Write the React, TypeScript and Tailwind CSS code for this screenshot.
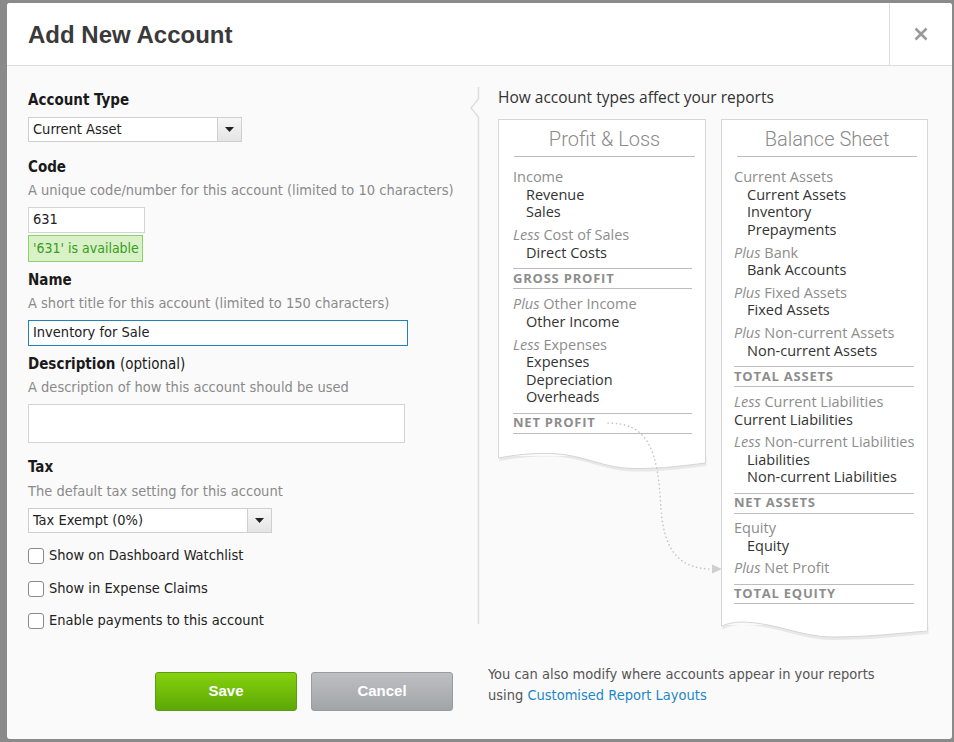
import type { ReactNode } from 'react';

const LEFT_FONT = "font-['DejaVu_Sans_Condensed','DejaVu_Sans',sans-serif]";
const CARD_FONT = "font-['Open_Sans',sans-serif]";

function Select({ value, width }: { value: string; width: string }) {
  return (
    <div className={`flex h-[25px] border border-[#cfcfcf] bg-white ${width}`}>
      <div className="flex flex-1 items-center pl-[4px] text-[14.5px] text-[#222]">{value}</div>
      <div className="flex w-[24px] items-center justify-center border-l border-[#cfcfcf] bg-gradient-to-b from-[#f7f7f7] to-[#e4e4e4]">
        <svg width="9" height="5" viewBox="0 0 9 5">
          <path d="M0 0 H9 L4.5 5 Z" fill="#222" />
        </svg>
      </div>
    </div>
  );
}

function Label({ children, className = '' }: { children: ReactNode; className?: string }) {
  return <div className={`text-[15px] leading-[18px] font-bold text-[#1a1a1a] ${className}`}>{children}</div>;
}

function Help({ children, className = '' }: { children: ReactNode; className?: string }) {
  return <div className={`text-[14.5px] leading-[18px] text-[#8a8a8a] ${className}`}>{children}</div>;
}

function Check({ label, className = '' }: { label: string; className?: string }) {
  return (
    <div className={`flex h-[18px] items-center gap-[5px] ${className}`}>
      <div className="h-[16px] w-[16px] rounded-[3px] border border-[#8a8a8a] bg-white" />
      <span className="text-[14.5px] text-[#222]">{label}</span>
    </div>
  );
}

function Head({ pre, children, className = '' }: { pre?: string; children: ReactNode; className?: string }) {
  return (
    <div className={`h-[17.5px] text-[14.5px] leading-[17.5px] whitespace-nowrap text-[#8d8d8d] ${className}`}>
      {pre && <span className="italic">{pre} </span>}
      {children}
    </div>
  );
}

function Item({ children, flat = false }: { children: ReactNode; flat?: boolean }) {
  return (
    <div
      className={`h-[17.5px] text-[14.5px] leading-[17.5px] font-medium whitespace-nowrap text-[#333] ${flat ? '' : 'pl-[13px]'}`}
    >
      {children}
    </div>
  );
}

function Total({ children, h = 'h-[21px]' }: { children: ReactNode; h?: string }) {
  return (
    <div
      className={`mt-[7px] flex items-center border-y border-[#bdbdbd] ${h} text-[13px] font-bold tracking-[0.06em] text-[#8d8d8d]`}
    >
      {children}
    </div>
  );
}

function Card({
  title,
  width,
  wave,
  pb,
  pl,
  children,
}: {
  title: string;
  width: number;
  wave: string;
  pb: string;
  pl: string;
  children: ReactNode;
}) {
  return (
    <div className="flex flex-col" style={{ width }}>
      <div className={`border-x border-t border-[#d6d6d6] bg-white ${pb}`}>
        <div className="mr-[10px] ml-[15px] border-b border-[#bdbdbd] pt-[7px] pb-[5px] text-center font-['Roboto',sans-serif] text-[20px] leading-[24px] font-light text-[#8a8a8a]">
          {title}
        </div>
        <div className={`pt-[11px] pr-[13px] ${pl}`}>{children}</div>
      </div>
      <svg className="block h-[17px] w-full overflow-visible" viewBox={`0 0 ${width} 17`} preserveAspectRatio="none">
        <path d={wave} transform="translate(1 3)" fill="rgba(0,0,0,0.07)" />
        <path d={wave} fill="#fff" stroke="#d6d6d6" strokeWidth="1" />
      </svg>
    </div>
  );
}

export default function App() {
  return (
    <div className="h-[742px] w-[954px] overflow-hidden bg-[#8a8a8a] pt-[3px] pl-[7px]">
      <div className="flex h-[736px] w-[945px] flex-col overflow-hidden rounded-[3px] bg-[#fafafa]">
        {/* Header */}
        <div className="flex h-[63px] shrink-0 border-b border-[#dcdcdc] bg-white">
          <div className="flex flex-1 items-center pt-[2px] pl-[21px] font-['Liberation_Sans',Arial,sans-serif] text-[24px] font-bold text-[#3a3a3a]">
            Add New Account
          </div>
          <div className="flex w-[63px] items-center justify-center border-l border-[#dcdcdc]">
            <svg width="14" height="14" viewBox="0 0 14 14">
              <path d="M1.5 1.5 L12.5 12.5 M12.5 1.5 L1.5 12.5" stroke="#9a9a9a" strokeWidth="2.6" />
            </svg>
          </div>
        </div>

        {/* Body */}
        <div className="flex h-[583px] shrink-0">
          {/* Form column */}
          <div className={`w-[463px] pt-[25px] pl-[21px] ${LEFT_FONT}`}>
            <Label>Account Type</Label>
            <Select value="Current Asset" width="w-[214px] mt-[8px]" />

            <Label className="mt-[16px]">Code</Label>
            <Help className="mt-[5px]">A unique code/number for this account (limited to 10 characters)</Help>
            <div className="mt-[8px] flex h-[26px] w-[117px] items-center border border-[#d4d4d4] bg-white pl-[4px] text-[14.5px] text-[#222]">
              631
            </div>
            <div className="mt-[2px] flex h-[27px] w-[115px] items-center overflow-hidden border border-[#8fd26c] bg-[#d8f1c6] pl-[4px] text-[14px] whitespace-nowrap text-[#3a9c1c]">
              '631' is available
            </div>

            <Label className="mt-[9px]">Name</Label>
            <Help className="mt-[5px]">A short title for this account (limited to 150 characters)</Help>
            <div className="mt-[8px] flex h-[26px] w-[380px] items-center border border-[#1f82ba] bg-white pl-[4px] text-[14.5px] text-[#222]">
              Inventory for Sale
            </div>

            <Label className="mt-[9px]">
              Description <span className="font-normal">(optional)</span>
            </Label>
            <Help className="mt-[5px]">A description of how this account should be used</Help>
            <div className="mt-[8px] h-[39px] w-[377px] border border-[#d4d4d4] bg-white" />

            <Label className="mt-[15px]">Tax</Label>
            <Help className="mt-[6px]">The default tax setting for this account</Help>
            <Select value="Tax Exempt (0%)" width="w-[244px] mt-[8px]" />

            <Check label="Show on Dashboard Watchlist" className="mt-[14px]" />
            <Check label="Show in Expense Claims" className="mt-[15px]" />
            <Check label="Enable payments to this account" className="mt-[14px]" />
          </div>

          {/* Divider with notch */}
          <svg className="mt-[21px] shrink-0 self-start" width="10" height="537" viewBox="0 0 10 537">
            <path d="M8.5 0 V12 L1 21 L8.5 30 V537" fill="none" stroke="#dedede" strokeWidth="1.5" />
          </svg>

          {/* Reports explanation */}
          <div className={`ml-[18px] pt-[22px] ${CARD_FONT}`}>
            <div className="text-[15.5px] leading-[19px] text-[#333]">How account types affect your reports</div>
            <div className="relative mt-[12px] flex items-start gap-[15px]">
              <Card
                title="Profit & Loss"
                width={208}
                pb="pb-[19px]"
                pl="pl-[14px]"
                wave="M0.5 0 V5 C18 1.5 36 0 54 0.5 C85 1.5 105 15 134 15.5 C165 16 190 12 207.5 10 V0"
              >
                <Head>Income</Head>
                <Item>Revenue</Item>
                <Item>Sales</Item>
                <Head pre="Less" className="mt-[5.5px]">Cost of Sales</Head>
                <Item>Direct Costs</Item>
                <Total>GROSS PROFIT</Total>
                <Head pre="Plus" className="mt-[6px]">Other Income</Head>
                <Item>Other Income</Item>
                <Head pre="Less" className="mt-[5.5px]">Expenses</Head>
                <Item>Expenses</Item>
                <Item>Depreciation</Item>
                <Item>Overheads</Item>
                <Total>NET PROFIT</Total>
              </Card>
              <Card
                title="Balance Sheet"
                width={207}
                pb="pb-[18px]"
                pl="pl-[12px]"
                wave="M0.5 0 V4 C7 1.5 14 0 21 0 C55 0.5 80 15 111 15 C150 15 180 11 206.5 9 V0"
              >
                <Head>Current Assets</Head>
                <Item>Current Assets</Item>
                <Item>Inventory</Item>
                <Item>Prepayments</Item>
                <Head pre="Plus" className="mt-[5.5px]">Bank</Head>
                <Item>Bank Accounts</Item>
                <Head pre="Plus" className="mt-[5px]">Fixed Assets</Head>
                <Item>Fixed Assets</Item>
                <Head pre="Plus" className="mt-[5.5px]">Non-current Assets</Head>
                <Item>Non-current Assets</Item>
                <Total>TOTAL ASSETS</Total>
                <Head pre="Less" className="mt-[6px]">Current Liabilities</Head>
                <Item flat>Current Liabilities</Item>
                <Head pre="Less" className="mt-[5px]">Non-current Liabilities</Head>
                <Item>Liabilities</Item>
                <Item>Non-current Liabilities</Item>
                <Total>NET ASSETS</Total>
                <Head className="mt-[5.5px]">Equity</Head>
                <Item>Equity</Item>
                <Head pre="Plus" className="mt-[5px]">Net Profit</Head>
                <Total h="h-[20px]">TOTAL EQUITY</Total>
              </Card>

              {/* dotted link from net profit to equity */}
              <svg className="pointer-events-none absolute top-0 left-0" width="240" height="470" viewBox="0 0 240 470">
                <path
                  d="M110 304 C150 304 160 330 163 390 C166 430 180 450 214 450"
                  fill="none"
                  stroke="#c4c4c4"
                  strokeWidth="1.6"
                  strokeDasharray="0.1 4"
                  strokeLinecap="round"
                />
                <path d="M214 445.5 L224 450 L214 454.5 Z" fill="#cfcfcf" />
              </svg>
            </div>
          </div>
        </div>

        {/* Footer */}
        <div className="flex flex-1 items-start pt-[15px] pl-[148px]">
          <div className="mt-[8px] flex gap-[14px] font-['Liberation_Sans',Arial,sans-serif]">
            <button className="h-[39px] w-[142px] rounded-[3px] border border-[#5c9d16] bg-gradient-to-b from-[#86d10e] to-[#5ca805] text-[15px] font-bold text-white">
              Save
            </button>
            <button className="h-[39px] w-[142px] rounded-[3px] border border-[#999b9d] bg-gradient-to-b from-[#bdbfc2] to-[#a2a5a8] text-[15px] font-bold text-white">
              Cancel
            </button>
          </div>
          <div className={`ml-[35px] text-[14.5px] leading-[21px] text-[#555] ${LEFT_FONT}`}>
            <div>You can also modify where accounts appear in your reports</div>
            <div>
              using <span className="text-[#1e87c6]">Customised Report Layouts</span>
            </div>
          </div>
        </div>
      </div>
    </div>
  );
}
